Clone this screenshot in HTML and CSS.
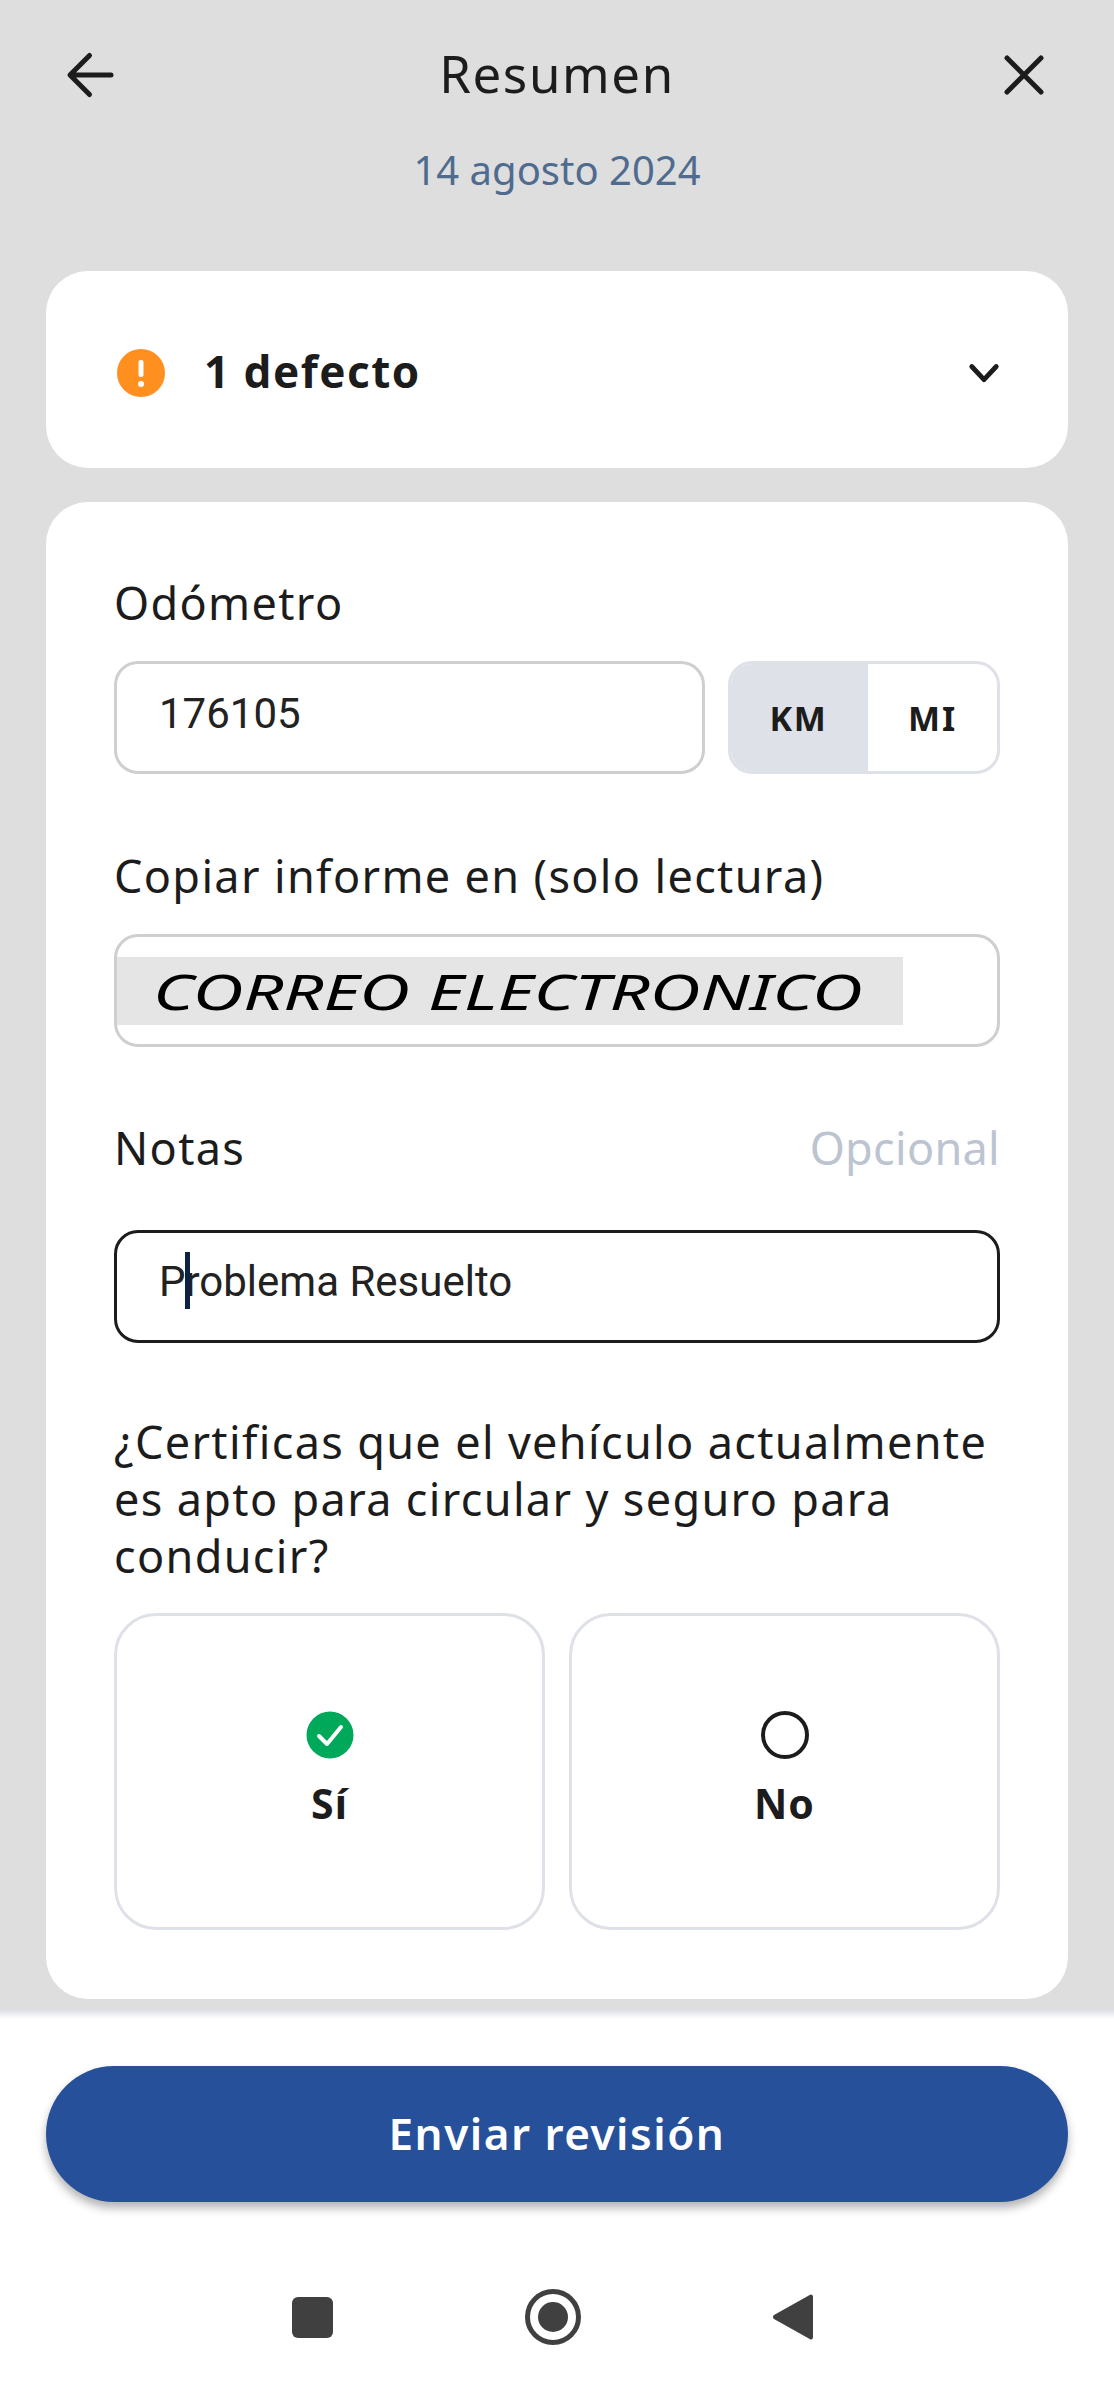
FILE: index.html
```html
<!DOCTYPE html>
<html lang="es">
<head>
<meta charset="utf-8">
<title>Resumen</title>
<link rel="stylesheet" href="styles.css">
</head>
<body>
<div class="screen">
  <main class="main">
    <header class="topbar">
      <svg class="top-icon" viewBox="0 0 48 48" width="48" height="48"><path d="M45 24H5M23.500 4.500L4 24l19.500 19.500" fill="none" stroke="#1c1c1c" stroke-width="5" stroke-linecap="round" stroke-linejoin="round"/></svg>
      <h1 class="title">Resumen</h1>
      <svg class="top-icon" viewBox="0 0 48 48" width="48" height="48"><path d="M7 7L41 41M41 7L7 41" fill="none" stroke="#1c1c1c" stroke-width="5" stroke-linecap="round"/></svg>
    </header>
    <p class="date">14 agosto 2024</p>

    <section class="card defect">
      <svg class="alert" viewBox="0 0 48 48" width="48" height="48"><circle cx="24" cy="24" r="24" fill="#ff8f1f"/><rect x="21.500" y="11" width="5" height="17" rx="2" fill="#fff"/><circle cx="24" cy="35" r="3" fill="#fff"/></svg>
      <span class="defect-text">1 defecto</span>
      <svg class="chev" viewBox="0 0 36 24" width="32" height="21"><path d="M4 4L18 19 32 4" fill="none" stroke="#1c1c1c" stroke-width="5.500" stroke-linecap="round" stroke-linejoin="round"/></svg>
    </section>

    <section class="card form">
      <div class="label odo-label">Odómetro</div>
      <div class="odo-row">
        <div class="field odo-input"><span class="value">176105</span></div>
        <div class="units">
          <span class="unit unit-on">KM</span>
          <span class="unit">MI</span>
        </div>
      </div>

      <div class="label copy-label">Copiar informe en (solo lectura)</div>
      <div class="field copy-field">
        <div class="redact"><span class="redact-text">CORREO ELECTRONICO</span></div>
      </div>

      <div class="label-row">
        <span class="label">Notas</span>
        <span class="optional">Opcional</span>
      </div>
      <div class="field notes"><span class="value notes-value">P<span class="caret"></span>roblema Resuelto</span></div>

      <p class="label question">¿Certificas que el vehículo actualmente es apto para circular y seguro para conducir?</p>
      <div class="choices">
        <div class="choice">
          <svg viewBox="0 0 48 48" width="48" height="48"><circle cx="24" cy="24" r="23.500" fill="#00a85a"/><path d="M13 25l8 8 14-17" fill="none" stroke="#fff" stroke-width="4" stroke-linecap="round" stroke-linejoin="round"/></svg>
          <span class="choice-text">Sí</span>
        </div>
        <div class="choice">
          <svg viewBox="0 0 48 48" width="48" height="48"><circle cx="24" cy="24" r="22" fill="none" stroke="#1c1c1c" stroke-width="4"/></svg>
          <span class="choice-text">No</span>
        </div>
      </div>
    </section>
  </main>

  <footer class="footer">
    <button class="submit" type="button">Enviar revisión</button>
    <nav class="navbar">
      <svg class="nav-square" viewBox="0 0 41 41" width="41" height="41"><rect width="41" height="41" rx="6" fill="#404040"/></svg>
      <svg viewBox="0 0 56 56" width="56" height="56"><circle cx="28" cy="28" r="25.500" fill="none" stroke="#404040" stroke-width="5"/><circle cx="28" cy="28" r="15" fill="#404040"/></svg>
      <svg class="nav-back" viewBox="0 0 41 48" width="41" height="48"><path d="M41 3.500v41a2 2 0 0 1-3.300 1.500L2 26a2.500 2.500 0 0 1 0-4L37.700 2A2 2 0 0 1 41 3.500z" fill="#404040"/></svg>
    </nav>
  </footer>
</div>
</body>
</html>
```

FILE: styles.css
```css
* { box-sizing: border-box; }
html, body { margin: 0; padding: 0; }
body { font-family: "Noto Sans", sans-serif; color: #1c1c1c; background: #dedede; }
.screen { width: 1114px; height: 2385px; display: flex; flex-direction: column; overflow: hidden; }
.main { flex: 1; padding: 0 46px; }
.topbar { height: 146px; padding: 0 20px; display: flex; align-items: center; justify-content: space-between; }
.top-icon { flex: none; margin-top: 3px; }
.title { margin: 0; font-size: 51px; line-height: 60px; font-weight: 400; letter-spacing: 1.600px; }
.date { margin: -2px 0 0; height: 127px; text-align: center; font-size: 40px; line-height: 52px; color: #4f6b8f; }
.card { background: #fff; border-radius: 42px; }
.defect { height: 197px; display: flex; align-items: center; padding: 6px 68px 0 71px; }
.alert { flex: none; }
.defect-text { margin-left: 39px; padding-bottom: 3px; flex: 1; font-size: 44px; font-weight: 700; letter-spacing: 1.500px; }
.chev { flex: none; margin-top: 2px; }
.form { margin-top: 34px; height: 1497px; padding: 0 68px; }
.label { font-size: 45px; line-height: 60px; letter-spacing: 1.350px; }
.odo-label { padding-top: 71px; height: 131px; }
.odo-row { display: flex; gap: 23px; margin-top: 28px; }
.field { height: 113px; border: 3px solid #cfcfcf; border-radius: 24px; background: #fff; }
.odo-input { flex: 1; padding: 25px 42px; }
.value { font-family: Roboto, sans-serif; font-size: 42px; line-height: 50px; color: #222; }
.units { width: 272px; height: 113px; display: flex; border: 3px solid #dfe1e8; border-radius: 24px; overflow: hidden; }
.unit { flex: 1; display: flex; align-items: center; justify-content: center; font-size: 34px; font-weight: 700; letter-spacing: 1.800px; }
.unit-on { flex: none; background: #dfe1e8; width: 137px; padding-right: 2px; }
.copy-label { margin-top: 72px; }
.copy-field { margin-top: 28px; overflow: hidden; padding-top: 20px; }
.redact { width: 786px; height: 68px; background: #e5e5e5; padding-left: 36px; font-family: "Noto Sans", sans-serif; font-style: italic; font-size: 50px; line-height: 68px; color: #000; white-space: nowrap; }
.redact-text { display: inline-block; transform: scaleX(1.400); transform-origin: left; }
.label-row { display: flex; justify-content: space-between; margin-top: 71px; }
.optional { font-size: 45px; line-height: 60px; color: #bcc4d2; letter-spacing: .3px; }
.notes { margin-top: 52px; border-color: #1c1c1c; padding: 24px 42px; }
.notes-value { position: relative; display: inline-block; }
.caret { position: absolute; left: 26px; top: -5px; width: 5px; height: 57px; background: #0d2240; }
.question { margin: 70px 0 0; line-height: 57px; }
.choices { display: flex; gap: 24px; margin-top: 29px; }
.choice { flex: 1; height: 317px; border: 3px solid #dfe1e8; border-radius: 42px; display: flex; flex-direction: column; align-items: center; padding-top: 95px; gap: 14px; }
.choice-text { font-size: 41px; line-height: 60px; font-weight: 700; letter-spacing: 1px; }
.footer { height: 375px; flex: none; background: linear-gradient(#dcdfe5, #fff 9px); padding: 56px 46px 0; }
.submit { display: block; width: 100%; height: 136px; border: 0; border-radius: 68px; padding: 0 0 2px; background: #26519a; color: #fff; font-family: "Noto Sans", sans-serif; font-size: 44px; font-weight: 600; letter-spacing: 1.500px; box-shadow: 0 6px 10px rgba(0,0,0,.3); }
.navbar { display: flex; justify-content: center; align-items: center; margin-top: 87px; padding-right: 9px; }
.nav-square { margin-right: 192px; }
.nav-back { margin-left: 191px; }
```
